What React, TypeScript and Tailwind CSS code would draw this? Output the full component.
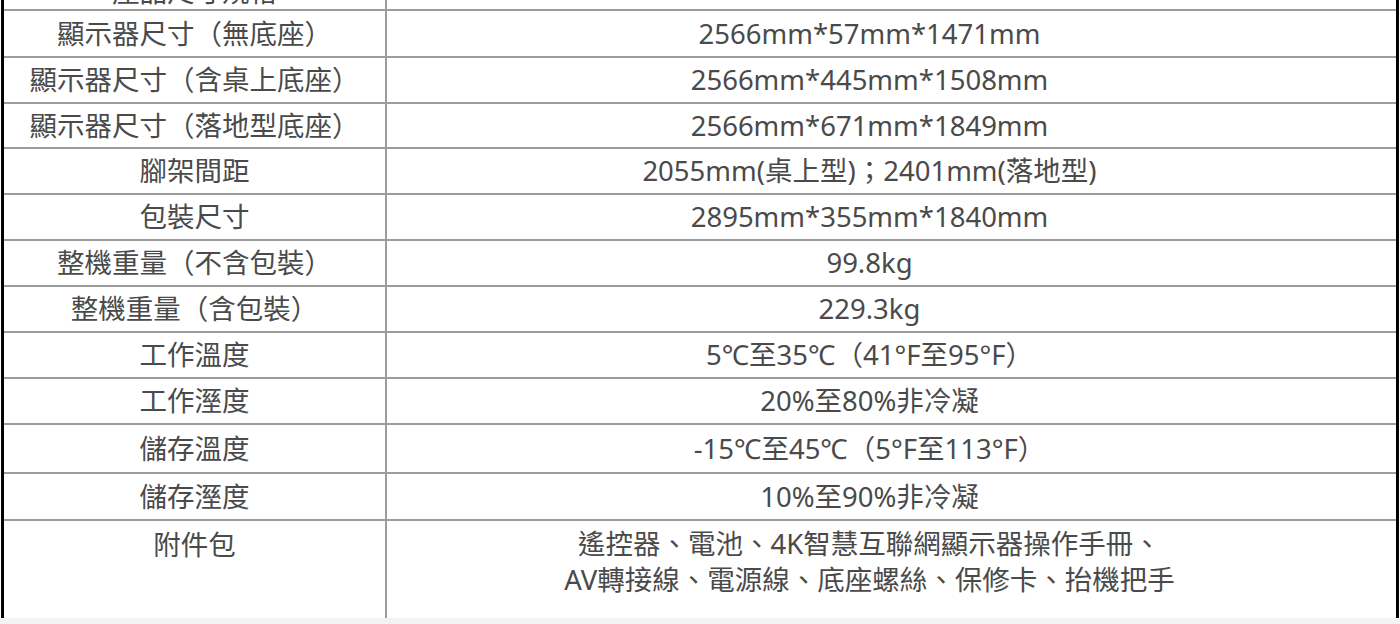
const rows = [
  { label: '顯示器尺寸（無底座）', value: '2566mm*57mm*1471mm', h: 'h-[47px]' },
  { label: '顯示器尺寸（含桌上底座）', value: '2566mm*445mm*1508mm', h: 'h-[46px]' },
  { label: '顯示器尺寸（落地型底座）', value: '2566mm*671mm*1849mm', h: 'h-[45px]' },
  { label: '腳架間距', value: '2055mm(桌上型)；2401mm(落地型)', h: 'h-[46px]' },
  { label: '包裝尺寸', value: '2895mm*355mm*1840mm', h: 'h-[46px]' },
  { label: '整機重量（不含包裝）', value: '99.8kg', h: 'h-[46px]' },
  { label: '整機重量（含包裝）', value: '229.3kg', h: 'h-[46px]' },
  { label: '工作溫度', value: '5℃至35℃（41°F至95°F）', h: 'h-[46px]' },
  { label: '工作溼度', value: '20%至80%非冷凝', h: 'h-[46px]' },
  { label: '儲存溫度', value: '-15℃至45℃（5°F至113°F）', h: 'h-[49px]' },
  { label: '儲存溼度', value: '10%至90%非冷凝', h: 'h-[47px]' },
];

export default function App() {
  return (
    <div
      className="w-[1400px] h-[624px] overflow-hidden bg-white text-[#4a4a4a] text-[27.5px] leading-none"
      style={{ fontFamily: '"Noto Sans", "Noto Sans CJK TC", sans-serif' }}
    >
      <div className="h-[618px] ml-px mr-px border-l-[3px] border-r-[3px] border-black flex flex-col">
        {/* cut-off row at the top */}
        <div className="grid grid-cols-[383px_1fr] h-[9px] overflow-hidden">
          <div className="border-r-2 border-[#9c9c9c]">
            <div className="h-[46px] -mt-[31px] flex items-center justify-center">產品尺寸規格</div>
          </div>
          <div />
        </div>

        {rows.map((row) => (
          <div key={row.label} className={`grid grid-cols-[383px_1fr] border-t-2 border-[#9c9c9c] ${row.h}`}>
            <div className="border-r-2 border-[#9c9c9c] flex items-center justify-center">{row.label}</div>
            <div className="flex items-center justify-center pr-[44px]">{row.value}</div>
          </div>
        ))}

        <div className="grid grid-cols-[383px_1fr] border-t-2 border-[#9c9c9c] flex-1">
          <div className="border-r-2 border-[#9c9c9c] flex justify-center pt-[10px]">附件包</div>
          <div className="flex flex-col items-center pr-[44px] pt-[10px] leading-[36px]">
            <div className="-mt-[5px]">遙控器、電池、4K智慧互聯網顯示器操作手冊、</div>
            <div>AV轉接線、電源線、底座螺絲、保修卡、抬機把手</div>
          </div>
        </div>
      </div>
      <div className="h-[6px] bg-[#f3f3f3]" />
    </div>
  );
}
